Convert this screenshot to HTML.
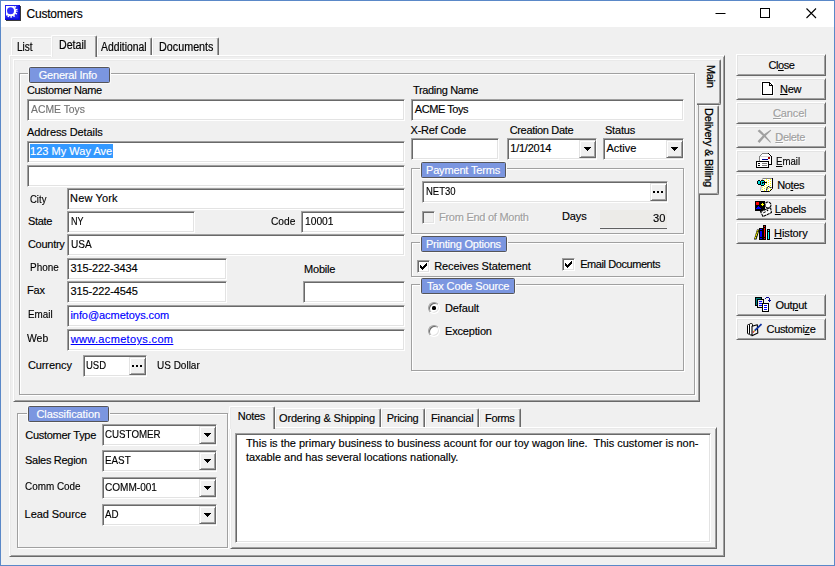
<!DOCTYPE html>
<html><head><meta charset="utf-8"><title>Customers</title>
<style>
html,body{margin:0;padding:0}
body{width:835px;height:566px;background:#f0f0f0;position:relative;overflow:hidden;font-family:"Liberation Sans",sans-serif;font-size:11px;color:#000}
*{box-sizing:border-box}
.a{position:absolute}
.t{position:absolute;white-space:pre;line-height:20px;height:20px;transform-origin:0 50%;-webkit-text-stroke:0.15px currentColor}
u{text-decoration:underline;text-underline-offset:1px}
#titlebar{left:1px;top:1px;width:833px;height:26px;background:#fff}
#wb{left:0;top:0;width:835px;height:566px;border:1px solid #5a88c8;pointer-events:none}
.inp{position:absolute;height:22px;background:#fff;border:1px solid;border-color:#a0a0a0 #fff #fff #a0a0a0;box-shadow:inset 1px 1px 0 #696969,inset -1px -1px 0 #e3e3e3}
.btn{position:absolute;width:90px;height:22px;left:736px;background:#f0f0f0;border:1px solid;border-color:#fff #696969 #696969 #fff;box-shadow:inset 1px 1px 0 #e3e3e3,inset -1px -1px 0 #a0a0a0}
.panel{position:absolute;border:1px solid;border-color:#fff #696969 #696969 #fff;box-shadow:inset 1px 1px 0 #e9e9e9,inset -1px -1px 0 #a0a0a0}
.grp{position:absolute;border:1px solid #a0a0a0;box-shadow:1px 1px 0 #fff,inset 1px 1px 0 #fff}
.glab{position:absolute;height:16px;background:#7b96e0;border:1px solid #555559;border-radius:1.5px;box-shadow:0 0 0 1px #f9f9f9}
.tab{position:absolute;background:#f0f0f0;border:1px solid;border-color:#fff #696969 transparent #fff;border-bottom:none;border-radius:2px 2px 0 0;box-shadow:inset -1px 0 0 #a0a0a0,inset 1px 1px 0 #e9e9e9}
.vtab{position:absolute;background:#f0f0f0;border:1px solid;border-color:#fff #696969 #696969 transparent;border-left:none;border-radius:0 2px 2px 0;box-shadow:inset -1px -1px 0 #a0a0a0,inset 0 1px 0 #e9e9e9}
.cb{position:absolute;width:13px;height:13px;background:#fff;border:1px solid;border-color:#a0a0a0 #fff #fff #a0a0a0;box-shadow:inset 1px 1px 0 #696969,inset -1px -1px 0 #e3e3e3}
.dd{position:absolute;width:17px;height:18px;background:#f0f0f0;border:1px solid;border-color:#e3e3e3 #696969 #696969 #e3e3e3;box-shadow:inset 1px 1px 0 #fff,inset -1px -1px 0 #a0a0a0}
.dd svg{position:absolute;left:4px;top:6px}
.el{position:absolute;width:17px;height:18px;background:#f0f0f0;border:1px solid;border-color:#e3e3e3 #696969 #696969 #e3e3e3;box-shadow:inset 1px 1px 0 #fff,inset -1px -1px 0 #a0a0a0}
.el i{position:absolute;top:7px;width:2px;height:2px;background:#000}
.rad{position:absolute;width:12px;height:12px;border-radius:50%;background:#fff;border:1px solid;border-color:#a0a0a0 #fff #fff #a0a0a0;box-shadow:inset 1px 1px 0 #696969,inset -1px -1px 0 #e3e3e3;transform:rotate(0deg)}
.cb svg{position:absolute;left:1px;top:1px}
</style></head><body>
<div class="a" id="titlebar"></div>
<div class="t" id="ttl" style="left:26.55px;top:4px;letter-spacing:-0.237px;font-size:12px;">Customers</div>
<svg class="a" style="left:5px;top:5px" width="16" height="16" viewBox="0 0 16 16"><defs><clipPath id="ic"><rect x="1" y="1" width="13" height="13"/></clipPath></defs><rect x="0" y="0" width="15" height="15" fill="#2020f0"/><rect x="0" y="13.500" width="15" height="1.500" fill="#0a0ad0"/><rect x="13.500" y="0" width="1.500" height="15" fill="#0a0ad0"/><rect x="15" y="1" width="1" height="15" fill="#3a3a3a"/><rect x="1" y="15" width="15" height="1" fill="#3a3a3a"/><g clip-path="url(#ic)"><rect x="1" y="1" width="8.500" height="4" fill="#fff"/><rect x="1" y="1" width="4" height="9.500" fill="#fff"/><circle cx="5.900" cy="5.900" r="5.300" fill="#fff"/><circle cx="5.900" cy="5.900" r="5.900" fill="none" stroke="#fff" stroke-width="1.700" stroke-dasharray="1.450 1.450" stroke-dashoffset="0.700"/></g><circle cx="5.500" cy="5.700" r="3.500" fill="#3030ff"/></svg>
<svg class="a" style="left:710px;top:1px" width="124" height="26" viewBox="0 0 124 26"><path d="M5.5 12.5h10" stroke="#000" stroke-width="1" fill="none"/><rect x="50.5" y="7.5" width="9" height="9" stroke="#000" fill="none"/><path d="M96.5 7.5l9.5 9.5M106 7.5l-9.500 9.500" stroke="#000" stroke-width="1.1" fill="none"/></svg>

<!-- outer tab control -->
<div class="panel" style="left:9px;top:55px;width:716px;height:502px"></div>
<div class="tab" style="left:11px;top:37px;width:42px;height:18px;border-right:none;box-shadow:inset 1px 1px 0 #e9e9e9"></div>
<div class="tab" style="left:97px;top:37px;width:55px;height:18px"></div>
<div class="tab" style="left:152px;top:37px;width:67px;height:18px"></div>
<div class="tab" style="left:51px;top:35px;width:46px;height:22px"></div>
<div class="t" id="tb1" style="left:16.8px;top:37px;transform:scaleX(0.8337);font-size:12px;-webkit-text-stroke:0.2px #000;">List</div><div class="t" id="tb2" style="left:58.7px;top:35px;transform:scaleX(0.8868);font-size:12px;-webkit-text-stroke:0.2px #000;">Detail</div><div class="t" id="tb3" style="left:101.31px;top:37px;transform:scaleX(0.8647);font-size:12px;-webkit-text-stroke:0.2px #000;">Additional</div><div class="t" id="tb4" style="left:158.5px;top:37px;transform:scaleX(0.8979);font-size:12px;-webkit-text-stroke:0.2px #000;">Documents</div>

<!-- inner tab control with vertical tabs -->
<div class="panel" style="left:13px;top:59px;width:687px;height:343px"></div>
<div class="vtab" style="left:699px;top:105px;width:20px;height:90px"></div>
<div class="vtab" style="left:697px;top:59px;width:24px;height:46px"></div>
<div class="t" id="vt1" style="left:721px;top:65px;transform-origin:0 0;transform:rotate(90deg);letter-spacing:-0.35px;-webkit-text-stroke:0.25px #000;">Main</div><div class="t" id="vt2" style="left:719px;top:108.07px;transform-origin:0 0;transform:rotate(90deg);letter-spacing:-0.2px;-webkit-text-stroke:0.25px #000;">Delivery &amp; Billing</div>

<!-- General Info -->
<div class="grp" style="left:19px;top:73px;width:676px;height:322px"></div>
<div class="glab" style="left:29px;top:67px;width:81px"></div><div class="t" id="g1t" style="left:38.7px;top:65px;letter-spacing:-0.182px;color:#fff;">General Info</div>
<div class="t" id="l1" style="left:27.05px;top:80px;letter-spacing:-0.422px;">Customer Name</div>
<div class="inp" style="left:27px;top:99px;width:378px"></div><div class="t" id="v1" style="left:31.02px;top:99px;transform:scaleX(0.9423);color:#727272;">ACME Toys</div>
<div class="t" id="l2" style="left:27px;top:122px;letter-spacing:-0.086px;">Address Details</div>
<div class="inp" style="left:27px;top:141px;width:378px"></div>
<div class="a" style="left:30px;top:144px;width:83px;height:14px;background:#3399ff"></div><div class="t" id="v2" style="left:30px;top:141px;letter-spacing:0.023px;color:#fff;">123 My Way Ave</div>
<div class="inp" style="left:27px;top:165px;width:378px"></div>
<div class="t" id="l3" style="left:30.03px;top:189px;transform:scaleX(0.8651);">City</div><div class="inp" style="left:67px;top:188px;width:338px"></div><div class="t" id="v3" style="left:70.07px;top:188px;letter-spacing:0.126px;">New York</div>
<div class="t" id="l4" style="left:27.88px;top:211px;letter-spacing:-0.28px;">State</div><div class="inp" style="left:67px;top:211px;width:128px"></div><div class="t" id="v4" style="left:70.66px;top:211px;transform:scaleX(0.8180);">NY</div>
<div class="t" id="l4b" style="left:270.59px;top:211px;transform:scaleX(0.9268);">Code</div><div class="inp" style="left:301px;top:211px;width:104px"></div><div class="t" id="v4b" style="left:304.94px;top:211px;transform:scaleX(0.9319);">10001</div>
<div class="t" id="l5" style="left:27.88px;top:234px;letter-spacing:-0.257px;">Country</div><div class="inp" style="left:67px;top:234px;width:338px"></div><div class="t" id="v5" style="left:70.59px;top:234px;transform:scaleX(0.9166);">USA</div>
<div class="t" id="l6" style="left:29.6px;top:257px;transform:scaleX(0.9035);">Phone</div><div class="inp" style="left:67px;top:258px;width:160px"></div><div class="t" id="v6" style="left:70.55px;top:258px;letter-spacing:-0.13px;">315-222-3434</div>
<div class="t" id="l6b" style="left:304px;top:259px;letter-spacing:-0.2px;">Mobile</div>
<div class="t" id="l7" style="left:27px;top:280px;letter-spacing:-0.21px;">Fax</div><div class="inp" style="left:67px;top:281px;width:160px"></div><div class="t" id="v7" style="left:70.55px;top:281px;letter-spacing:-0.103px;">315-222-4545</div>
<div class="inp" style="left:303px;top:281px;width:102px"></div>
<div class="t" id="l8" style="left:27.88px;top:304px;transform:scaleX(0.8946);">Email</div><div class="inp" style="left:67px;top:305px;width:338px"></div><div class="t" id="v8" style="left:70.45px;top:305px;letter-spacing:-0.061px;color:#0000ff;">info@acmetoys.com</div>
<div class="t" id="l9" style="left:27px;top:328px;transform:scaleX(0.9442);">Web</div><div class="inp" style="left:67px;top:329px;width:338px"></div><div class="t" id="v9" style="left:70.69px;top:329px;letter-spacing:0.343px;color:#0000ff;text-decoration:underline;">www.acmetoys.com</div>
<div class="t" id="l10" style="left:27.88px;top:355px;letter-spacing:-0.077px;">Currency</div><div class="inp" style="left:83px;top:355px;width:64px"></div><div class="t" id="v10" style="left:86.39px;top:355px;transform:scaleX(0.8654);">USD</div>
<div class="el" style="left:129px;top:357px"><i style="left:2px"></i><i style="left:6px"></i><i style="left:10px"></i></div>
<div class="t" id="v10b" style="left:156.6px;top:355px;transform:scaleX(0.9079);">US Dollar</div>

<!-- right column -->
<div class="t" id="r1" style="left:413px;top:80px;letter-spacing:-0.351px;">Trading Name</div><div class="inp" style="left:411px;top:99px;width:273px"></div><div class="t" id="rv1" style="left:414.82px;top:99px;letter-spacing:-0.451px;">ACME Toys</div>
<div class="t" id="r2" style="left:410.54px;top:120px;letter-spacing:-0.209px;">X-Ref Code</div><div class="inp" style="left:411px;top:138px;width:88px"></div>
<div class="t" id="r3" style="left:509.69px;top:120px;letter-spacing:-0.335px;">Creation Date</div><div class="inp" style="left:507px;top:138px;width:90px"></div><div class="t" id="rv3" style="left:510.31px;top:138px;letter-spacing:-0.24px;">1/1/2014</div><div class="dd" style="left:579px;top:140px"><svg width="7" height="4" viewBox="0 0 7 4" shape-rendering="crispEdges"><path d="M0 0h7v1h-1v1h-1v1h-1v1h-1v-1h-1v-1h-1v-1h-1z" fill="#000"/></svg></div>
<div class="t" id="r4" style="left:604.88px;top:120px;letter-spacing:-0.146px;">Status</div><div class="inp" style="left:603px;top:138px;width:81px"></div><div class="t" id="rv4" style="left:606.38px;top:138px;">Active</div><div class="dd" style="left:666px;top:140px"><svg width="7" height="4" viewBox="0 0 7 4" shape-rendering="crispEdges"><path d="M0 0h7v1h-1v1h-1v1h-1v1h-1v-1h-1v-1h-1v-1h-1z" fill="#000"/></svg></div>

<div class="grp" style="left:411px;top:168px;width:273px;height:66px"></div>
<div class="glab" style="left:421px;top:162px;width:85px"></div><div class="t" id="g2t" style="left:426px;top:160px;letter-spacing:-0.167px;color:#fff;">Payment Terms</div>
<div class="inp" style="left:422px;top:181px;width:246px"></div><div class="t" id="rv5" style="left:425.7px;top:181px;transform:scaleX(0.8631);">NET30</div>
<div class="el" style="left:650px;top:183px"><i style="left:2px"></i><i style="left:6px"></i><i style="left:10px"></i></div>
<div class="cb" style="left:422px;top:211px;background:#f0f0f0"></div><div class="t" id="r6" style="left:439.02px;top:207px;letter-spacing:-0.263px;color:#a0a0a0;text-shadow:1px 1px 0 #fff;">From End of Month</div>
<div class="t" id="r7" style="left:562px;top:206px;letter-spacing:-0.124px;">Days</div>
<div class="a" style="left:600px;top:210px;width:67px;height:17px;background:#ecebe8"></div><div class="a" style="left:600px;top:228px;width:67px;height:1px;background:#606060"></div><div class="t" id="rv7" style="left:653.39px;top:208px;transform:scaleX(1.0096);">30</div>

<div class="grp" style="left:411px;top:242px;width:273px;height:35px"></div>
<div class="glab" style="left:421px;top:236px;width:86px"></div><div class="t" id="g3t" style="left:426px;top:234px;letter-spacing:-0.214px;color:#fff;">Printing Options</div>
<div class="cb" style="left:417px;top:260px"><svg width="9" height="9" viewBox="0 0 9 9" shape-rendering="crispEdges"><path d="M1 3v3h1v1h1v1h1v-1h1v-1h1v-1h1v-1h1v-3h-1v1h-1v1h-1v1h-1v1h-1v-1h-1v-1z" fill="#000"/></svg></div><div class="t" id="r8" style="left:434.2px;top:256px;letter-spacing:-0.112px;">Receives Statement</div>
<div class="cb" style="left:562px;top:258px"><svg width="9" height="9" viewBox="0 0 9 9" shape-rendering="crispEdges"><path d="M1 3v3h1v1h1v1h1v-1h1v-1h1v-1h1v-1h1v-3h-1v1h-1v1h-1v1h-1v1h-1v-1h-1v-1z" fill="#000"/></svg></div><div class="t" id="r9" style="left:580.14px;top:254px;letter-spacing:-0.421px;">Email Documents</div>

<div class="grp" style="left:411px;top:284px;width:273px;height:87px"></div>
<div class="glab" style="left:421px;top:278px;width:94px"></div><div class="t" id="g4t" style="left:427px;top:276px;letter-spacing:-0.143px;color:#fff;">Tax Code Source</div>
<div class="rad" style="left:428px;top:302px"></div><div class="a" style="left:432px;top:306px;width:4px;height:4px;background:#000;border-radius:1.6px"></div><div class="t" id="r10" style="left:445.07px;top:298px;letter-spacing:-0.157px;">Default</div>
<div class="rad" style="left:428px;top:325px"></div><div class="t" id="r11" style="left:445.07px;top:321px;letter-spacing:-0.178px;">Exception</div>

<!-- classification -->
<div class="grp" style="left:17px;top:413px;width:211px;height:135px"></div>
<div class="glab" style="left:28px;top:406px;width:81px"></div><div class="t" id="g5t" style="left:36.52px;top:404px;letter-spacing:-0.098px;color:#fff;">Classification</div>
<div class="t" id="c1" style="left:25.29px;top:425px;letter-spacing:-0.28px;">Customer Type</div><div class="inp" style="left:102px;top:424px;width:115px"></div><div class="t" id="cv1" style="left:104.88px;top:424px;transform:scaleX(0.8872);">CUSTOMER</div><div class="dd" style="left:199px;top:426px"><svg width="7" height="4" viewBox="0 0 7 4" shape-rendering="crispEdges"><path d="M0 0h7v1h-1v1h-1v1h-1v1h-1v-1h-1v-1h-1v-1h-1z" fill="#000"/></svg></div>
<div class="t" id="c2" style="left:25.05px;top:450px;letter-spacing:-0.295px;">Sales Region</div><div class="inp" style="left:102px;top:450px;width:115px"></div><div class="t" id="cv2" style="left:105.22px;top:450px;transform:scaleX(0.8937);">EAST</div><div class="dd" style="left:199px;top:452px"><svg width="7" height="4" viewBox="0 0 7 4" shape-rendering="crispEdges"><path d="M0 0h7v1h-1v1h-1v1h-1v1h-1v-1h-1v-1h-1v-1h-1z" fill="#000"/></svg></div>
<div class="t" id="c3" style="left:25.12px;top:476px;transform:scaleX(0.9008);">Comm Code</div><div class="inp" style="left:102px;top:477px;width:115px"></div><div class="t" id="cv3" style="left:104.88px;top:477px;transform:scaleX(0.9136);">COMM-001</div><div class="dd" style="left:199px;top:479px"><svg width="7" height="4" viewBox="0 0 7 4" shape-rendering="crispEdges"><path d="M0 0h7v1h-1v1h-1v1h-1v1h-1v-1h-1v-1h-1v-1h-1z" fill="#000"/></svg></div>
<div class="t" id="c4" style="left:24.59px;top:504px;letter-spacing:-0.066px;">Lead Source</div><div class="inp" style="left:102px;top:504px;width:115px"></div><div class="t" id="cv4" style="left:105px;top:504px;transform:scaleX(0.8882);">AD</div><div class="dd" style="left:199px;top:506px"><svg width="7" height="4" viewBox="0 0 7 4" shape-rendering="crispEdges"><path d="M0 0h7v1h-1v1h-1v1h-1v1h-1v-1h-1v-1h-1v-1h-1z" fill="#000"/></svg></div>

<!-- bottom tabs -->
<div class="panel" style="left:230px;top:427px;width:487px;height:122px"></div>
<div class="tab" style="left:275px;top:408px;width:106px;height:19px"></div>
<div class="tab" style="left:381px;top:408px;width:44px;height:19px"></div>
<div class="tab" style="left:425px;top:408px;width:54px;height:19px"></div>
<div class="tab" style="left:479px;top:408px;width:42px;height:19px"></div>
<div class="tab" style="left:229px;top:406px;width:46px;height:23px"></div>
<div class="t" id="bt1" style="left:237.83px;top:406px;letter-spacing:-0.355px;">Notes</div><div class="t" id="bt2" style="left:279px;top:408px;letter-spacing:-0.161px;">Ordering &amp; Shipping</div><div class="t" id="bt3" style="left:386.83px;top:408px;letter-spacing:-0.316px;">Pricing</div><div class="t" id="bt4" style="left:431.07px;top:408px;letter-spacing:-0.175px;">Financial</div><div class="t" id="bt5" style="left:485.06px;top:408px;letter-spacing:-0.378px;">Forms</div>
<div class="inp" style="left:235px;top:433px;width:476px;height:110px"></div>
<div class="t" id="n1" style="left:245.9px;top:433px;letter-spacing:-0.01px;">This is the primary business to business acount for our toy wagon line.&nbsp; This customer is non-</div><div class="t" id="n2" style="left:245.9px;top:447px;letter-spacing:-0.045px;">taxable and has several locations nationally.</div>

<!-- buttons -->
<div class="btn" style="top:54px"></div><div class="t" id="b1" style="left:768.38px;top:55px;letter-spacing:-0.39px;">Cl<u>o</u>se</div>
<div class="btn" style="top:78px"></div><div class="t" id="b2" style="left:780.07px;top:79px;letter-spacing:-0.32px;"><u>N</u>ew</div>
<div class="btn" style="top:102px"></div><div class="t" id="b3" style="left:773.05px;top:103px;letter-spacing:-0.142px;color:#a0a0a0;text-shadow:1px 1px 0 #fff;"><u>C</u>ancel</div>
<div class="btn" style="top:126px"></div><div class="t" id="b4" style="left:775.35px;top:127px;letter-spacing:-0.372px;color:#a0a0a0;text-shadow:1px 1px 0 #fff;"><u>D</u>elete</div>
<div class="btn" style="top:150px"></div><div class="t" id="b5" style="left:775.87px;top:151px;transform:scaleX(0.8736);"><u>E</u>mail</div>
<div class="btn" style="top:174px"></div><div class="t" id="b6" style="left:777.2px;top:175px;letter-spacing:-0.385px;">No<u>t</u>es</div>
<div class="btn" style="top:198px"></div><div class="t" id="b7" style="left:774.83px;top:199px;letter-spacing:-0.18px;"><u>L</u>abels</div>
<div class="btn" style="top:222px"></div><div class="t" id="b8" style="left:774.07px;top:223px;letter-spacing:-0.11px;"><u>H</u>istory</div>
<div class="btn" style="top:294px"></div><div class="t" id="b9" style="left:775.5px;top:295px;letter-spacing:-0.3px;">Out<u>p</u>ut</div>
<div class="btn" style="top:318px"></div><div class="t" id="b10" style="left:766.55px;top:319px;letter-spacing:-0.342px;">Customi<u>z</u>e</div>
<svg class="a" style="left:0;top:0" width="835" height="566" viewBox="0 0 835 566">
<g shape-rendering="crispEdges">
<path d="M761 81h10l3 3v12h-13z" fill="#fff"/>
<path d="M762 82h8v1h1v1h1v1h1v10h-11z" fill="#000"/>
<path d="M763 83h6v3h3v8h-9z" fill="#fff"/>
<rect x="770" y="84" width="1" height="1" fill="#fff"/>
<path d="M762 153h7l3 3v9h-4v-4h-9v-5z" fill="#fff"/>
<rect x="762" y="153" width="6" height="1" fill="#808080"/><rect x="768" y="153" width="1" height="1" fill="#000"/>
<rect x="761" y="154" width="1" height="1" fill="#808080"/><rect x="760" y="155" width="1" height="1" fill="#808080"/><rect x="759" y="156" width="1" height="5" fill="#808080"/>
<rect x="769" y="154" width="1" height="1" fill="#000"/><rect x="770" y="155" width="1" height="1" fill="#000"/><rect x="771" y="156" width="1" height="9" fill="#000"/><rect x="769" y="164" width="3" height="1" fill="#000"/>
<rect x="760" y="156" width="11" height="1" fill="#d8d8d8"/>
<rect x="768" y="157" width="2" height="2" fill="#a00000"/>
<rect x="762" y="159" width="6" height="1" fill="#000090"/>
<rect x="756" y="161" width="13" height="7" fill="#000"/><rect x="757" y="162" width="11" height="5" fill="#fff"/>
<rect x="758" y="163" width="2" height="1" fill="#000"/><rect x="758" y="165" width="2" height="1" fill="#000"/><rect x="762" y="163" width="5" height="1" fill="#808080"/><rect x="762" y="165" width="5" height="1" fill="#808080"/>
<rect x="759" y="228" width="4" height="12" fill="#000"/><rect x="760" y="229" width="2" height="1" fill="#0000ff"/><rect x="760" y="231" width="2" height="6" fill="#0000ff"/><rect x="760" y="238" width="2" height="1" fill="#0000ff"/>
<rect x="763" y="225" width="3" height="15" fill="#000"/><rect x="764" y="226" width="1" height="1" fill="#ff0000"/><rect x="764" y="228" width="1" height="9" fill="#ff0000"/><rect x="764" y="238" width="1" height="1" fill="#ff0000"/>
<rect x="767" y="229" width="3" height="11" fill="#000"/><rect x="768" y="230" width="1" height="1" fill="#00ffff"/><rect x="768" y="232" width="1" height="7" fill="#00ffff"/>
<rect x="755" y="297" width="7" height="9" fill="#000"/><rect x="756" y="298" width="5" height="7" fill="#008080"/>
<rect x="757" y="299" width="7" height="9" fill="#000"/><rect x="758" y="300" width="5" height="7" fill="#e8e8e8"/><rect x="759" y="301" width="3" height="1" fill="#0000ff"/><rect x="759" y="303" width="3" height="1" fill="#0000ff"/><rect x="759" y="305" width="3" height="1" fill="#0000ff"/>
<rect x="762" y="303" width="7" height="9" fill="#000"/><rect x="763" y="304" width="5" height="7" fill="#fff"/><rect x="764" y="305" width="3" height="1" fill="#0000ff"/><rect x="764" y="307" width="3" height="1" fill="#0000ff"/><rect x="764" y="309" width="3" height="1" fill="#0000ff"/>
<rect x="765" y="298" width="1" height="1" fill="#000090"/><rect x="766" y="297" width="3" height="1" fill="#000090"/><rect x="769" y="298" width="1" height="3" fill="#000090"/><rect x="768" y="300" width="3" height="1" fill="#000090"/><rect x="769" y="301" width="1" height="1" fill="#000090"/>
<rect x="755" y="201" width="10" height="10" fill="#000"/><rect x="756" y="202" width="3" height="3" fill="#ff0000"/>
<rect x="762" y="203" width="1" height="3" fill="#ffff00"/><rect x="761" y="204" width="3" height="1" fill="#ffff00"/>
<rect x="758" y="206" width="1" height="1" fill="#0000ff"/><rect x="757" y="207" width="3" height="1" fill="#0000ff"/><rect x="756" y="208" width="5" height="1" fill="#0000ff"/>
</g>
<circle cx="768" cy="205" r="3" fill="#fff" stroke="#000" stroke-width="1.100" stroke-dasharray="3 0.700"/>
<path d="M760.500 211.500l10-4l1 5l-8.500 4z" fill="#fff" stroke="#000" stroke-width="1.100" stroke-dasharray="3 0.600" stroke-linejoin="round"/>
<circle cx="767.500" cy="210.400" r="0.800" fill="#000"/><path d="M763.300 212.800l2.400-1" stroke="#000" stroke-width="1"/>
<path d="M754 239.500l3-10h2.500l-3 10z" fill="#000"/><path d="M755.300 238.500l2.600-8.300" stroke="#ffff00" stroke-width="1.100" stroke-dasharray="2 0.500"/>
<path d="M757.600 130.900L759.500 129.500L765.100 134.900L771 142.200L770.300 142.800L764 136.800Z" fill="#a0a0a0"/>
<path d="M757.600 141.200L764 134.300L770.600 129.700L771.200 130.400L765.300 136.300L759.400 143Z" fill="#a0a0a0"/>
<defs><pattern id="yd" x="0" y="0" width="4" height="2" patternUnits="userSpaceOnUse" shape-rendering="crispEdges"><rect width="4" height="2" fill="#fff"/><rect x="0" y="0" width="1" height="1" fill="#ffff00"/><rect x="2" y="1" width="1" height="1" fill="#ffff00"/></pattern></defs>
<path d="M762.500 178.500h10v10l-3 3h-9z" fill="url(#yd)"/>
<path d="M762.500 178.500h9.500" stroke="#808080" stroke-width="1" fill="none"/><path d="M762.500 179l-2 11.500" stroke="#b0b0b0" stroke-width="1" fill="none"/>
<path d="M772.500 178v10.500l-3 3h-8.500" stroke="#000" stroke-width="1" fill="none"/>
<path d="M766.500 190.500c0.500-3 1.500-4.500 2.500-4s0.500 1.500 2.500 1" stroke="#000" stroke-width="1" fill="none"/>
<g shape-rendering="crispEdges"><rect x="758" y="180" width="2" height="1" fill="#000"/><rect x="757" y="181" width="4" height="3" fill="#000"/><rect x="758" y="184" width="2" height="1" fill="#000"/><rect x="758" y="181" width="2" height="3" fill="#00d8d8"/><rect x="761" y="180" width="3" height="1" fill="#000"/><rect x="760" y="181" width="5" height="4" fill="#000"/><rect x="761" y="185" width="3" height="1" fill="#000"/><rect x="761" y="181" width="3" height="4" fill="#00d8d8"/><rect x="762" y="182" width="1" height="2" fill="#000"/><rect x="763" y="182" width="1" height="1" fill="#000"/><rect x="765" y="182" width="2" height="1" fill="#000"/></g>
<rect x="747.500" y="324.500" width="2.500" height="9.500" rx="1" fill="#fff" stroke="#000" stroke-width="1"/>
<rect x="749.500" y="323.500" width="3" height="11.500" rx="1.200" fill="#fff" stroke="#000" stroke-width="1"/>
<path d="M752 326.300l5.300-1.600l0.500 8.300l-5.800 2.700z" fill="#f4f4f4" stroke="#000" stroke-width="1.100" stroke-linejoin="round"/>
<path d="M754.700 330.700l6.800-6.600" stroke="#0a1a9a" stroke-width="1.700"/><path d="M754.700 330.700l6.800-6.600" stroke="#20b0c0" stroke-width="0.700" stroke-dasharray="0.700 0.700"/>
<path d="M753.800 331.600l1.100-1" stroke="#b8a000" stroke-width="1.300"/><circle cx="753.400" cy="331.900" r="0.750" fill="#e00000"/>
</svg>
<div class="a" id="wb"></div>

</body></html>
